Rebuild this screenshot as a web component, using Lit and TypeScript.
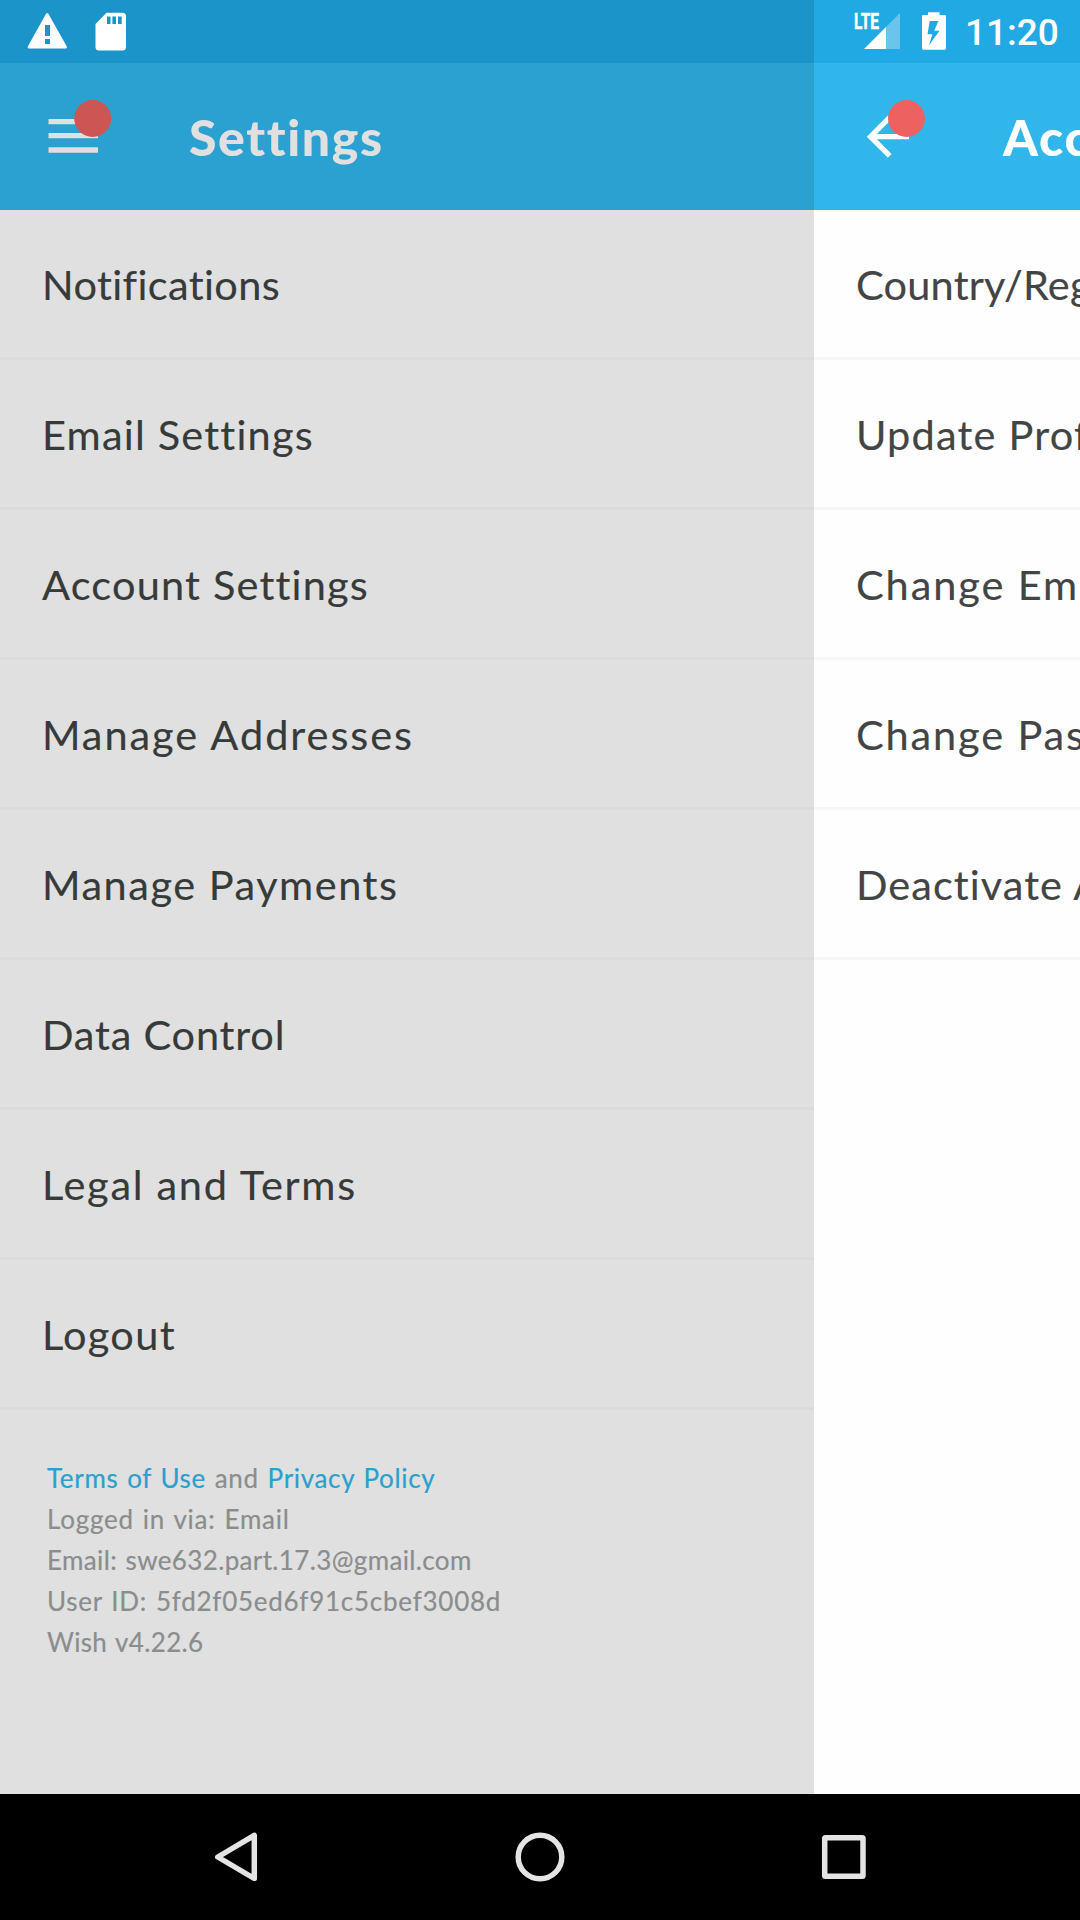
import { LitElement, html, css } from "lit";
import { customElement, property } from "lit/decorators.js";
import { styleMap } from "lit/directives/style-map.js";

interface Label {
  text: string;
  /** Letter spacing in pixels. */
  track: number;
}

const SETTINGS: Label[] = [
  { text: "Notifications", track: 0.38 },
  { text: "Email Settings", track: 1.2 },
  { text: "Account Settings", track: 1.18 },
  { text: "Manage Addresses", track: 1.95 },
  { text: "Manage Payments", track: 1.52 },
  { text: "Data Control", track: 0.8 },
  { text: "Legal and Terms", track: 1.7 },
  { text: "Logout", track: 1.3 },
];

const ACCOUNT: Label[] = [
  { text: "Country/Region", track: 0.2 },
  { text: "Update Profile", track: 1.2 },
  { text: "Change Email", track: 1.9 },
  { text: "Change Password", track: 1.85 },
  { text: "Deactivate Account", track: 1.05 },
];

const DETAILS: Label[] = [
  { text: "Logged in via: Email", track: 0.78 },
  { text: "Email: swe632.part.17.3@gmail.com", track: 0.36 },
  { text: "User ID: 5fd2f05ed6f91c5cbef3008d", track: 0.74 },
  { text: "Wish v4.22.6", track: 0.34 },
];

const tracking = (px: number) => styleMap({ letterSpacing: `${px}px` });

@customElement("menu-list")
export class MenuList extends LitElement {
  @property({ attribute: false }) items: Label[] = [];

  static styles = css`
    :host {
      display: block;
    }
    .row {
      box-sizing: border-box;
      height: 150px;
      padding-left: 42px;
      border-bottom: 3px solid var(--divider);
      display: flex;
      align-items: center;
      white-space: nowrap;
      font-size: 41.5px;
      line-height: 50px;
      color: var(--ink);
      -webkit-text-stroke: 0.15px var(--ink);
    }
  `;

  render() {
    return this.items.map(
      (item) => html`<div class="row"><span style=${tracking(item.track)}>${item.text}</span></div>`
    );
  }
}

@customElement("app-root")
export class AppRoot extends LitElement {
  static styles = css`
    :host {
      display: block;
      width: 1080px;
      height: 1920px;
      overflow: hidden;
      font-family: Lato, "Liberation Sans", sans-serif;
    }
    .screen {
      display: grid;
      grid-template-columns: 814px 266px;
      grid-template-rows: 1794px 126px;
    }
    .pane {
      display: flex;
      flex-direction: column;
      overflow: hidden;
      min-width: 0;
    }
    .left {
      background: #e0e0e0;
      --divider: #dbdbdb;
      --ink: #363b3a;
    }
    .right {
      background: #fefefe;
      --divider: #f7f7f7;
      --ink: #434545;
    }
    .status {
      height: 63px;
      flex: none;
      display: flex;
    }
    .left .status {
      background: #1b95c9;
    }
    .right .status {
      background: #20a9e2;
    }
    .header {
      height: 147px;
      flex: none;
      display: flex;
      align-items: center;
      white-space: nowrap;
      font-size: 50px;
      line-height: 60px;
      font-weight: 900;
      letter-spacing: 1.6px;
    }
    .left .header {
      background: #2aa1d0;
      color: #e0e0e0;
    }
    .right .header {
      background: #30b6eb;
      color: #fff;
    }
    .header svg {
      flex: none;
    }
    .time {
      font: 500 37px/44px Roboto, sans-serif;
      padding: 11px 0 0 1px;
      color: #fff;
    }
    .lte {
      font: 700 22px Roboto, sans-serif;
      stroke: #fff;
      stroke-width: 0.5px;
    }
    .info {
      padding: 48px 0 0 47px;
      font-size: 26px;
      line-height: 41px;
      color: #8a8d8d;
      word-spacing: 1.5px;
      white-space: nowrap;
      -webkit-text-stroke: 0.2px;
    }
    .link {
      color: #2b9fcd;
    }
    .nav {
      grid-column: 1 / -1;
      background: #000;
      display: flex;
    }
    svg {
      display: block;
    }
  `;

  render() {
    return html`
      <div class="screen">
        <section class="pane left">
          <div class="status">
            <svg width="140" height="63" viewBox="0 0 140 63">
              <path
                fill="#fff"
                fill-rule="evenodd"
                d="M46.2 13.6Q47.2 12.2 48.2 13.6L66.8 46.4Q67.5 48.5 65.8 48.5H28.8Q27.1 48.5 27.8 46.4ZM45 25V36H50V25ZM45 39V44H50V39Z"
              />
              <path
                fill="#fff"
                fill-rule="evenodd"
                d="M106.500 12.700H122.500Q126 12.700 126 16.200V47Q126 50.500 122.500 50.500H99Q95.500 50.500 95.500 47V24ZM107 16.500V24H110.500V16.500ZM112.400 16.500V24H116V16.500ZM118 16.500V24H121.700V16.500Z"
              />
            </svg>
          </div>
          <header class="header">
            <svg width="189" height="147" viewBox="0 63 189 147">
              <path fill="#e0e0e0" d="M48.500 119H98V124.200H48.500ZM48.500 133H98V138.200H48.500ZM48.500 147.300H98V152.700H48.500Z" />
              <circle cx="92.700" cy="118.500" r="18.500" fill="#cd5655" />
            </svg>
            <span>Settings</span>
          </header>
          <menu-list .items=${SETTINGS}></menu-list>
          <div class="info">
            <div style=${tracking(0.67)}>
              <span class="link">Terms of Use</span> and <span class="link">Privacy Policy</span>
            </div>
            ${DETAILS.map((d) => html`<div style=${tracking(d.track)}>${d.text}</div>`)}
          </div>
        </section>

        <section class="pane right">
          <div class="status">
            <svg width="150" height="63" viewBox="814 0 150 63">
              <path fill="#fff" opacity="0.33" d="M886 27L900 13V49H886Z" />
              <path fill="#fff" d="M864 49L886 27V49Z" />
              <text class="lte" x="854" y="29.300" fill="#fff" textLength="25" lengthAdjust="spacingAndGlyphs">LTE</text>
              <path
                fill="#fff"
                fill-rule="evenodd"
                d="M928 12.300H939.500V15H944.800Q946 15 946 16.200V48.300Q946 49.700 944.800 49.700H923.200Q922 49.700 922 48.300V16.200Q922 15 923.200 15H928ZM929.700 21L927.500 34.300H932.400L929 45.300L939.500 30.700H934.300L938.400 21Z"
              />
            </svg>
            <span class="time">11:20</span>
          </div>
          <header class="header">
            <svg width="189" height="147" viewBox="814 63 189 147">
              <path
                fill="#fff"
                transform="translate(856.2 105) scale(2.640)"
                d="M20 11H7.830l5.590-5.590L12 4l-8 8 8 8 1.410-1.410L7.830 13H20v-2z"
              />
              <circle cx="906.500" cy="118.500" r="18.500" fill="#ed6261" />
            </svg>
            <span>Account Settings</span>
          </header>
          <menu-list .items=${ACCOUNT}></menu-list>
        </section>

        <nav class="nav">
          <svg width="1080" height="126" viewBox="0 1794 1080 126" fill="none" stroke="#e4e4e4" stroke-width="5.500" stroke-linejoin="round">
            <path d="M254.300 1835.300V1878.500L217.800 1857Z" />
            <circle cx="540" cy="1857" r="21.800" />
            <rect x="824.700" y="1837.700" width="38.300" height="38.500" rx="0.800" />
          </svg>
        </nav>
      </div>
    `;
  }
}
